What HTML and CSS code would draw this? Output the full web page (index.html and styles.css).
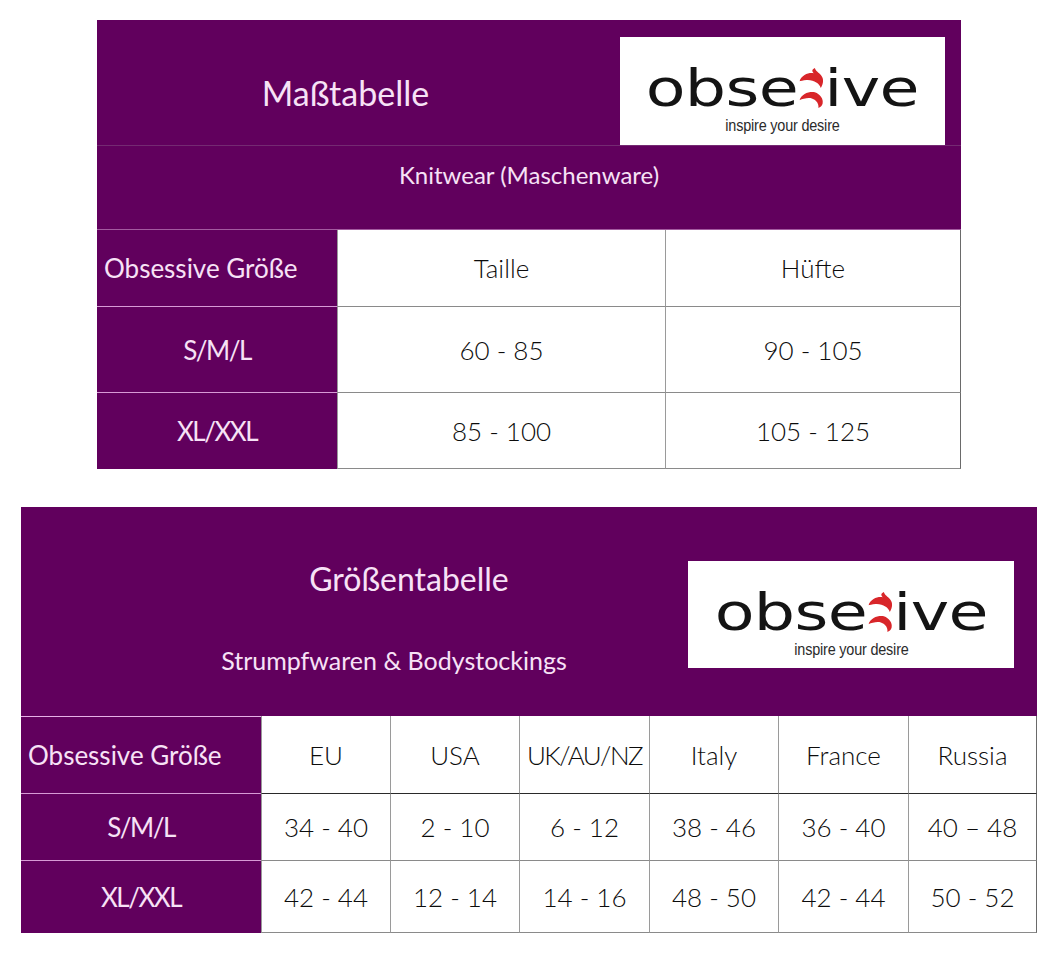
FILE: index.html
```html
<!DOCTYPE html>
<html lang="de">
<head>
<meta charset="utf-8">
<title>Maßtabelle</title>
<link rel="stylesheet" href="styles.css">
</head>
<body>
<section class="sheet sheet-one">
  <header class="head-one">
    <h1 class="title title-one">Maßtabelle</h1>
    <div class="logo-box logo-one">
      <div class="logo">
        <div class="brand"><span class="brand-txt">obse</span><svg class="swirl" viewBox="0 0 20 42" aria-hidden="true"><path d="M0 14 C2 7 8 4.5 12 5.5 C10 3 11 1 13 0 C13.5 3 16.5 5 18.5 8 C20.5 11 20.5 16 18 21 C17 16 12 12 6 12.5 C3 12.8 1 13.5 0 14 Z" fill="#d8262a"/><path d="M0 34 C2 27 8 24.5 13 25.5 C17.5 27.5 20.5 32.5 19.5 37.5 C19 40 17.5 41 16 42 C16.5 38 14.5 33.5 10.5 32 C7 31 3 32.3 0 34 Z" fill="#d8262a"/></svg><span class="brand-txt">ive</span></div>
        <div class="tagline">inspire your desire</div>
      </div>
    </div>
  </header>
  <div class="band">Knitwear (Maschenware)</div>
  <div class="grid grid-one">
    <div class="cell label first left">Obsessive Größe</div>
    <div class="cell val">Taille</div>
    <div class="cell val end">Hüfte</div>
    <div class="cell label tight">S/M/L</div>
    <div class="cell val">60 - 85</div>
    <div class="cell val end">90 - 105</div>
    <div class="cell label last tight">XL/XXL</div>
    <div class="cell val">85 - 100</div>
    <div class="cell val end">105 - 125</div>
  </div>
</section>

<section class="sheet sheet-two">
  <header class="head-two">
    <div class="titles">
      <h1 class="title title-two">Größentabelle</h1>
      <p class="subtitle">Strumpfwaren &amp; Bodystockings</p>
    </div>
    <div class="logo-box logo-two">
      <div class="logo">
        <div class="brand"><span class="brand-txt">obse</span><svg class="swirl" viewBox="0 0 20 42" aria-hidden="true"><path d="M0 14 C2 7 8 4.5 12 5.5 C10 3 11 1 13 0 C13.5 3 16.5 5 18.5 8 C20.5 11 20.5 16 18 21 C17 16 12 12 6 12.5 C3 12.8 1 13.5 0 14 Z" fill="#d8262a"/><path d="M0 34 C2 27 8 24.5 13 25.5 C17.5 27.5 20.5 32.5 19.5 37.5 C19 40 17.5 41 16 42 C16.5 38 14.5 33.5 10.5 32 C7 31 3 32.3 0 34 Z" fill="#d8262a"/></svg><span class="brand-txt">ive</span></div>
        <div class="tagline">inspire your desire</div>
      </div>
    </div>
  </header>
  <div class="grid grid-two">
    <div class="cell label first left top">Obsessive Größe</div>
    <div class="cell val hdr">EU</div>
    <div class="cell val hdr">USA</div>
    <div class="cell val hdr tight">UK/AU/NZ</div>
    <div class="cell val hdr">Italy</div>
    <div class="cell val hdr">France</div>
    <div class="cell val hdr end">Russia</div>
    <div class="cell label tight">S/M/L</div>
    <div class="cell val">34 - 40</div>
    <div class="cell val">2 - 10</div>
    <div class="cell val">6 - 12</div>
    <div class="cell val">38 - 46</div>
    <div class="cell val">36 - 40</div>
    <div class="cell val end">40 – 48</div>
    <div class="cell label last tight">XL/XXL</div>
    <div class="cell val">42 - 44</div>
    <div class="cell val">12 - 14</div>
    <div class="cell val">14 - 16</div>
    <div class="cell val">48 - 50</div>
    <div class="cell val">42 - 44</div>
    <div class="cell val end">50 - 52</div>
  </div>
</section>
</body>
</html>
```

FILE: styles.css
```css
* { box-sizing: border-box; }

body {
  margin: 0;
  background: #ffffff;
  font-family: Lato, "Open Sans", "DejaVu Sans", sans-serif;
  font-weight: 300;
  color: #1a1a1a;
}

.sheet { background: #61005d; }

.sheet-one {
  margin: 20px 0 0 97px;
  width: 864px;
}

.sheet-two {
  margin: 38px 0 0 21px;
  width: 1016px;
}

.head-one {
  display: flex;
  height: 126px;
  padding: 17px 16px 0 0;
  border-bottom: 1px solid #742a72;
}

.title {
  margin: 0;
  font-weight: 400;
  color: #f7e2f6;
  text-align: center;
}

.title-one {
  flex: 1;
  font-size: 34px;
  line-height: 40px;
  margin-top: 36px;
  padding-right: 26px;
  align-self: flex-start;
}

.logo-box {
  background: #ffffff;
  display: flex;
  justify-content: center;
  align-items: flex-start;
}

.logo-one { width: 325px; height: 108px; }
.logo-two { width: 326px; height: 107px; }

.logo {
  display: flex;
  flex-direction: column;
  align-items: center;
  padding-top: 27px;
}

.brand {
  display: flex;
  align-items: flex-end;
  height: 48px;
  color: #141414;
  transform: scaleX(1.25);
}

.brand-txt {
  font-family: "DejaVu Sans", sans-serif;
  font-size: 52px;
  line-height: 48px;
  font-weight: 400;
  letter-spacing: -0.5px;
}

.swirl {
  width: 19px;
  height: 42px;
  margin: 0 1px 3px 1px;
}

.tagline {
  font-family: "Liberation Sans", Arial, sans-serif;
  font-size: 16px;
  line-height: 16px;
  color: #2b2b2b;
  transform: scaleX(0.9);
  margin-top: 6px;
  letter-spacing: -0.2px;
}

.band {
  height: 84px;
  padding-top: 14px;
  text-align: center;
  font-size: 24px;
  line-height: 30px;
  font-weight: 400;
  color: #f7e2f6;
  border-bottom: 1px solid #a35aa0;
}

.grid {
  display: grid;
  background: #ffffff;
}

.grid-one {
  grid-template-columns: 240px 328px 296px;
  grid-template-rows: 77px 86px 76px;
}

.grid-two {
  grid-template-columns: 240px 129px 129px 130px 129px 130px 129px;
  grid-template-rows: 78px 67px 72px;
}

.cell {
  display: flex;
  align-items: center;
  justify-content: center;
  font-size: 26px;
  white-space: nowrap;
}

.label {
  background: #61005d;
  color: #f7e2f6;
  font-weight: 400;
  border-bottom: 1px solid #d79ad6;
}

.label.left {
  justify-content: flex-start;
  padding-left: 7px;
}

.tight { letter-spacing: -1.5px; }

.label.last { border-bottom: 1px solid #61005d; }
.label.top { border-top: 1px solid #e6b0e6; }

.val {
  color: #0c0c0c;
  border-left: 1px solid #9a9a9a;
  border-bottom: 1px solid #8a8a8a;
}

.val.end { border-right: 1px solid #6a6a6a; }

.grid-two .val.hdr { border-bottom: 1px solid #2a2a2a; }

.head-two {
  display: flex;
  height: 209px;
  padding: 54px 23px 0 0;
}

.titles {
  flex: 1;
  display: flex;
  flex-direction: column;
}

.title-two {
  font-size: 32px;
  line-height: 40px;
  margin-top: -2px;
  padding-left: 109px;
}

.subtitle {
  margin: 46px 0 0;
  padding-left: 79px;
  text-align: center;
  font-size: 25px;
  line-height: 30px;
  font-weight: 400;
  color: #f7e2f6;
}
```
